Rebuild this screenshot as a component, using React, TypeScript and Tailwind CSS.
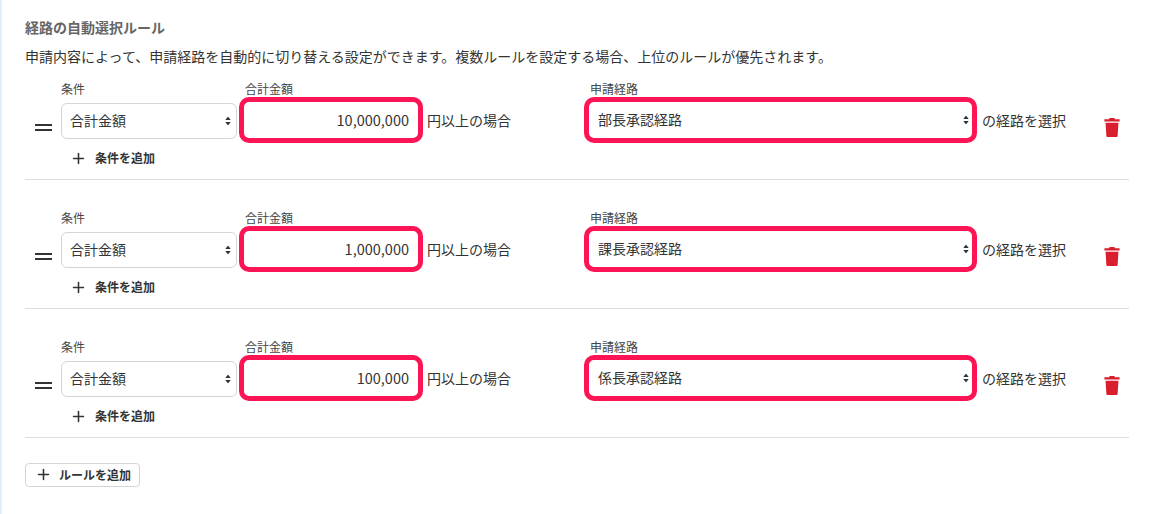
import { Plus } from "lucide-react"

const FONT = "font-['Noto_Sans_CJK_JP','Liberation_Sans',sans-serif]"

const rules = [
  { amount: "10,000,000", route: "部長承認経路" },
  { amount: "1,000,000", route: "課長承認経路" },
  { amount: "100,000", route: "係長承認経路" },
]

function SelectArrows({ right }: { right: string }) {
  return (
    <svg
      viewBox="0 0 6 10"
      className={`absolute top-1/2 ${right} h-[9px] w-[6px] -translate-y-1/2 fill-[#333]`}
    >
      <path d="M3 0 6 4H0Z" />
      <path d="M3 10 0 6H6Z" />
    </svg>
  )
}

function TrashIcon() {
  return (
    <svg viewBox="0 0 16 20" className="h-[19px] w-[16px] fill-[#d91f2d]">
      <path d="M5.5 0h5l.6 1.4H16v2.2H0V1.4h4.9Z" />
      <path d="M1.2 5h13.6l-.9 14a1 1 0 0 1-1 1H3.1a1 1 0 0 1-1-1Z" />
    </svg>
  )
}

function RuleRow({ amount, route }: { amount: string; route: string }) {
  return (
    <div className="flex h-[98px] border-b border-[#deddd6] pb-[11px]">
      {/* drag handle */}
      <div className="flex w-[36px] shrink-0 flex-col items-start pt-[42px] pl-[10px]">
        <div className="h-[2px] w-[17px] bg-[#333]" />
        <div className="mt-[3px] h-[2px] w-[17px] bg-[#333]" />
      </div>

      <div className="w-[176px] shrink-0">
        <div className="h-[14px] text-[12px] leading-[14px] text-[#444]">条件</div>
        <div className="relative mt-[7px]">
          <select
            defaultValue="合計金額"
            className="h-[36px] w-full appearance-none rounded-[6px] border border-[#d5d5d5] bg-white pb-[2px] pl-[8px] text-[14px] text-[#333] outline-none"
          >
            <option>合計金額</option>
          </select>
          <SelectArrows right="right-[6px]" />
        </div>
        <button className="mt-[9px] ml-[9px] flex h-[20px] items-center gap-[8px] text-[12px] font-bold text-[#333]">
          <Plus size={17} strokeWidth={2.2} />
          条件を追加
        </button>
      </div>

      <div className="ml-[2px] w-[184px] shrink-0">
        <div className="h-[14px] pl-[6px] text-[12px] leading-[14px] text-[#444]">合計金額</div>
        <input
          readOnly
          value={amount}
          className="mt-[1px] h-[46px] w-full rounded-[10px] border-[5px] border-[#fc1454] bg-white pr-[9px] pb-[2px] text-right text-[14.5px] text-[#333] outline-none"
        />
      </div>

      <div className="ml-[4px] w-[157px] shrink-0 pt-[28px] text-[14px] leading-[20px] text-[#333]">
        円以上の場合
      </div>

      <div className="w-[393px] shrink-0">
        <div className="h-[14px] pl-[6px] text-[12px] leading-[14px] text-[#444]">申請経路</div>
        <div className="relative mt-[1px]">
          <select
            defaultValue={route}
            className="h-[46px] w-full appearance-none rounded-[10px] border-[5px] border-[#fc1454] bg-white pb-[2px] pl-[9px] text-[14px] text-[#333] outline-none"
          >
            <option>{route}</option>
          </select>
          <SelectArrows right="right-[8px]" />
        </div>
      </div>

      <div className="ml-[5px] w-[122px] shrink-0 pt-[28px] text-[14px] leading-[20px] text-[#333]">
        の経路を選択
      </div>

      <div className="pt-[36px]">
        <TrashIcon />
      </div>
    </div>
  )
}

export default function App() {
  return (
    <div className={`${FONT} h-[514px] overflow-hidden border-l-2 border-[#e3effd] bg-white pt-[19px] pl-[23px]`}>
      <div className="w-[1104px]">
        <h2 className="text-[14px] leading-[16px] font-bold text-[#666]">経路の自動選択ルール</h2>
        <p className="mt-[13px] text-[14px] leading-[16px] text-[#333]">
          申請内容によって、申請経路を自動的に切り替える設定ができます。複数ルールを設定する場合、上位のルールが優先されます。
        </p>

        <div className="mt-[18px] flex flex-col gap-[31px]">
          {rules.map((rule) => (
            <RuleRow key={rule.route} amount={rule.amount} route={rule.route} />
          ))}
        </div>

        <button className="mt-[25px] flex h-[24px] w-[115px] items-center gap-[7px] rounded-[4px] border border-[#d5d5d5] bg-white pb-[1px] pl-[9px] text-[12px] font-bold text-[#333]">
          <Plus size={17} strokeWidth={2.2} />
          ルールを追加
        </button>
      </div>
    </div>
  )
}
